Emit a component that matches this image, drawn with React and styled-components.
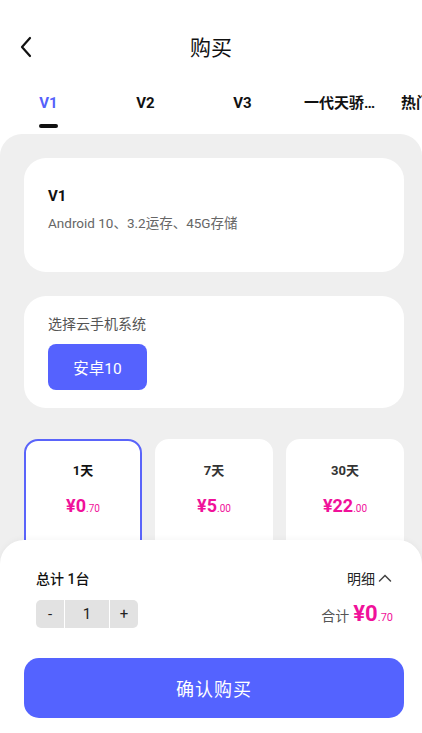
import React, { useState } from "react";
import styled, { createGlobalStyle } from "styled-components";

const Global = createGlobalStyle`
  html, body { margin: 0; padding: 0; background: #fff; }
  body { font-family: Roboto, "Noto Sans CJK SC", sans-serif; color: #111; }
  * { box-sizing: border-box; }
`;

const Page = styled.div`
  width: 422px;
  height: 733px;
  overflow: hidden;
  position: relative;
  background: #fff;
  display: flex;
  flex-direction: column;
`;

const Header = styled.div`
  height: 94px;
  display: flex;
  align-items: center;
  justify-content: center;
  position: relative;
  padding-bottom: 2px;
`;

const Back = styled.button`
  position: absolute;
  left: 14px;
  top: 34px;
  width: 24px;
  height: 26px;
  border: 0;
  background: none;
  padding: 0;
  display: flex;
  align-items: center;
  justify-content: center;
`;

const Title = styled.h1`
  margin: 0;
  font-size: 21px;
  font-weight: 400;
  color: #111;
`;

const Tabs = styled.div`
  display: flex;
  height: 40px;
  white-space: nowrap;
`;

const Tab = styled.div`
  flex: 0 0 97px;
  display: flex;
  flex-direction: column;
  align-items: center;
  font-size: 15px;
  font-weight: 700;
  color: ${(p) => (p.$active ? "#5561fb" : "#111")};
`;

const TabLabel = styled.span`
  line-height: 18px;
`;

const Indicator = styled.span`
  width: 19px;
  height: 4px;
  border-radius: 2px;
  background: #111;
  margin-top: 12px;
`;

const Panel = styled.div`
  flex: 1;
  background: #efefef;
  border-radius: 22px 22px 0 0;
  padding: 24px 18px 0 24px;
  display: flex;
  flex-direction: column;
  gap: 24px;
`;

const Card = styled.div`
  background: #fff;
  border-radius: 22px;
  width: 380px;
  padding: ${(p) => p.$pad || "24px"};
  min-height: ${(p) => p.$h || "auto"};
`;

const CardTitle = styled.div`
  font-size: 15px;
  font-weight: 700;
  color: #111;
  line-height: 18px;
  margin-top: 5px;
`;

const CardSub = styled.div`
  font-size: 13.5px;
  color: #666;
  margin-top: 9px;
  line-height: 18px;
`;

const Label = styled.div`
  font-size: 14px;
  color: #555;
  line-height: 18px;
  margin-top: 1px;
`;

const OsButton = styled.button`
  margin-top: 11px;
  width: 99px;
  height: 46px;
  border: 0;
  border-radius: 8px;
  background: #5562fe;
  color: #fff;
  font-family: inherit;
  font-size: 15.5px;
`;

const Plans = styled.div`
  display: flex;
  gap: 13px;
  margin-top: 7px;
`;

const Plan = styled.div`
  width: 118px;
  height: 130px;
  background: #fff;
  border-radius: 14px;
  border: 2px solid ${(p) => (p.$active ? "#5a64fa" : "#fff")};
  display: flex;
  flex-direction: column;
  align-items: center;
  padding-top: 21px;
`;

const PlanName = styled.div`
  font-size: 13px;
  font-weight: 700;
  color: ${(p) => (p.$active ? "#111" : "#333")};
  line-height: 18px;
`;

const Price = styled.div`
  color: #f0119a;
  font-weight: 700;
  font-size: ${(p) => p.$size || 18}px;
  margin-top: ${(p) => p.$mt ?? 17}px;
  line-height: 1;
  white-space: nowrap;
`;

const Cents = styled.span`
  font-size: ${(p) => p.$size || 10}px;
  font-weight: 400;
`;

const Sheet = styled.div`
  position: absolute;
  left: 0;
  right: 0;
  bottom: 0;
  height: 193px;
  background: #fff;
  border-radius: 24px 24px 0 0;
  box-shadow: 0 -1px 6px rgba(0, 0, 0, 0.04);
  padding: 28px 18px 14px 24px;
  display: flex;
  flex-direction: column;
`;

const Row = styled.div`
  display: flex;
  align-items: center;
  justify-content: space-between;
  padding: 0 12px;
  margin-top: ${(p) => p.$mt || 0}px;
`;

const Total = styled.div`
  font-size: 14px;
  font-weight: 500;
  color: #111;
`;

const Detail = styled.div`
  display: flex;
  align-items: center;
  gap: 3px;
  font-size: 14px;
  color: #222;
`;

const Stepper = styled.div`
  display: flex;
  height: 28px;
  border-radius: 5px;
  overflow: hidden;
  gap: 1px;
  background: #fff;
`;

const StepCell = styled.div`
  width: ${(p) => p.$w}px;
  background: #e2e2e2;
  display: flex;
  align-items: center;
  justify-content: center;
  font-size: 15px;
  color: #222;
`;

const Sum = styled.div`
  display: flex;
  align-items: baseline;
  gap: 4px;
  color: #555;
  font-size: 14px;
  margin-right: -1px;
`;

const Confirm = styled.button`
  margin-top: 30px;
  width: 380px;
  height: 60px;
  border: 0;
  border-radius: 15px;
  background: #5463ff;
  color: #fff;
  font-family: inherit;
  font-size: 18px;
  letter-spacing: 1px;
`;

const tabs = ["V1", "V2", "V3", "一代天骄…", "热门推荐…"];
const plans = [
  { name: "1天", yuan: "0", cents: ".70" },
  { name: "7天", yuan: "5", cents: ".00" },
  { name: "30天", yuan: "22", cents: ".00" },
];

export default function App() {
  const [active] = useState(0);
  const [plan] = useState(0);
  return (
    <Page>
      <Global />
      <Header>
        <Back aria-label="back">
          <svg width="14" height="22" viewBox="0 0 14 22">
            <path d="M11 2 L3 11 L11 20" fill="none" stroke="#111" strokeWidth="2.2" strokeLinecap="round" strokeLinejoin="round" />
          </svg>
        </Back>
        <Title>购买</Title>
      </Header>
      <Tabs>
        {tabs.map((t, i) => (
          <Tab key={t} $active={i === active}>
            <TabLabel>{t}</TabLabel>
            {i === active && <Indicator />}
          </Tab>
        ))}
      </Tabs>
      <Panel>
        <Card $h="114px">
          <CardTitle>V1</CardTitle>
          <CardSub>Android 10、3.2运存、45G存储</CardSub>
        </Card>
        <Card $pad="18px 24px 18px">
          <Label>选择云手机系统</Label>
          <OsButton>安卓10</OsButton>
        </Card>
        <Plans>
          {plans.map((p, i) => (
            <Plan key={p.name} $active={i === plan}>
              <PlanName $active={i === plan}>{p.name}</PlanName>
              <Price>
                ¥{p.yuan}
                <Cents>{p.cents}</Cents>
              </Price>
            </Plan>
          ))}
        </Plans>
      </Panel>
      <Sheet>
        <Row>
          <Total>总计 1台</Total>
          <Detail>
            明细
            <svg width="14" height="10" viewBox="0 0 14 10">
              <path d="M1.5 8 L7 2.5 L12.5 8" fill="none" stroke="#444" strokeWidth="1.5" strokeLinecap="round" />
            </svg>
          </Detail>
        </Row>
        <Row $mt={12}>
          <Stepper>
            <StepCell $w={28}>-</StepCell>
            <StepCell $w={44}>1</StepCell>
            <StepCell $w={28}>+</StepCell>
          </Stepper>
          <Sum>
            合计
            <Price $size={22} $mt={0}>
              ¥0
              <Cents $size={11}>.70</Cents>
            </Price>
          </Sum>
        </Row>
        <Confirm>确认购买</Confirm>
      </Sheet>
    </Page>
  );
}
